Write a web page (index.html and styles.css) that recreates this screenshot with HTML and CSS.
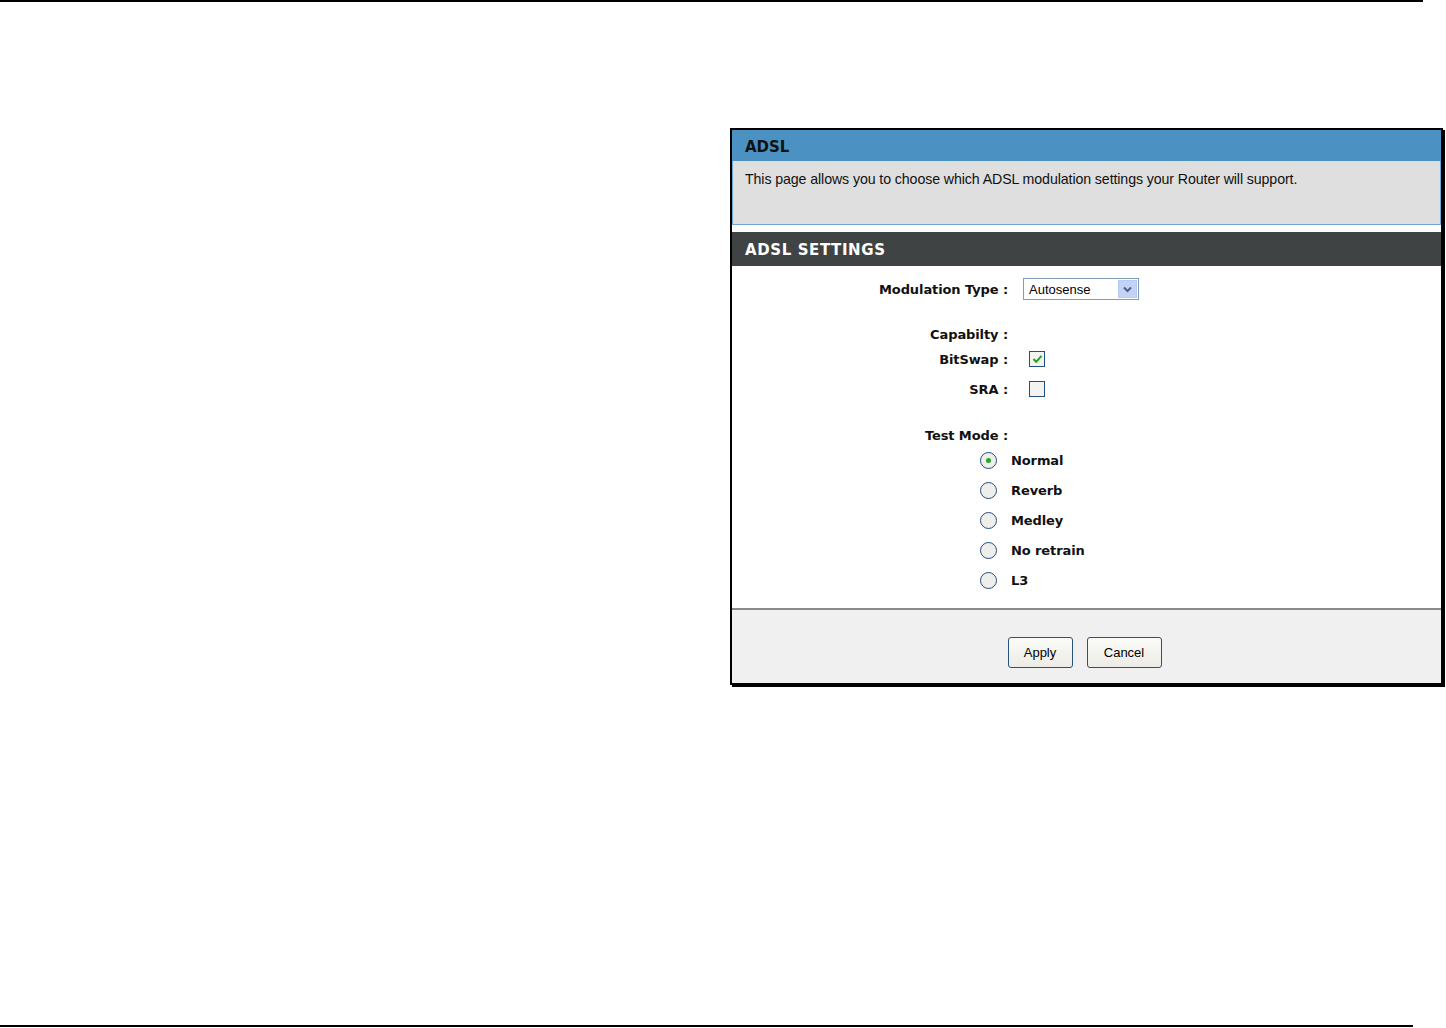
FILE: index.html
```html
<!DOCTYPE html>
<html lang="en">
<head>
  <meta charset="UTF-8">
  <title>ADSL</title>
  <link rel="stylesheet" href="styles.css">
</head>
<body>
  <div class="rule-top"></div>
  <div class="page">
    <div class="panel">
      <div class="head-blue">ADSL</div>
      <div class="desc">This page allows you to choose which ADSL modulation settings your Router will support.</div>
      <div class="gap"></div>
      <div class="head-dark">ADSL SETTINGS</div>
      <div class="content">
        <div class="row row-mod">
          <div class="label">Modulation Type :</div>
          <div class="select">
            <span>Autosense</span>
            <span class="arrow">
              <svg width="9" height="7" viewBox="0 0 9 7"><path d="M1 1.5 L4.5 5 L8 1.5" fill="none" stroke="#4d6185" stroke-width="2"/></svg>
            </span>
          </div>
        </div>
        <div class="row row-cap">
          <div class="label">Capabilty :</div>
        </div>
        <div class="row row-chk">
          <div class="label">BitSwap :</div>
          <span class="check on">
            <svg width="11" height="10" viewBox="0 0 11 10"><path d="M1.5 5 L4.2 7.8 L9.5 1.8" fill="none" stroke="#21a121" stroke-width="2"/></svg>
          </span>
        </div>
        <div class="row row-chk">
          <div class="label">SRA :</div>
          <span class="check"></span>
        </div>
        <div class="row row-test">
          <div class="label">Test Mode :</div>
        </div>
        <div class="radios">
          <div class="radio-row"><span class="radio on"></span><span class="opt">Normal</span></div>
          <div class="radio-row"><span class="radio"></span><span class="opt">Reverb</span></div>
          <div class="radio-row"><span class="radio"></span><span class="opt">Medley</span></div>
          <div class="radio-row"><span class="radio"></span><span class="opt">No retrain</span></div>
          <div class="radio-row"><span class="radio"></span><span class="opt">L3</span></div>
        </div>
      </div>
      <div class="actions">
        <button class="btn btn-apply">Apply</button>
        <button class="btn btn-cancel">Cancel</button>
      </div>
    </div>
  </div>
  <div class="rule-bottom"></div>
</body>
</html>
```

FILE: styles.css
```css
body {
  margin: 0;
  font-family: 'DejaVu Sans', 'Liberation Sans', sans-serif;
  background-color: #fff;
  color: #000;
  width: 1446px;
  height: 1028px;
  position: relative;
  overflow: hidden;
}

.rule-top {
  width: 1423px;
  height: 2px;
  background-color: #000;
}

.rule-bottom {
  position: absolute;
  left: 0;
  top: 1025px;
  width: 1413px;
  height: 2px;
  background-color: #000;
}

.page {
  padding: 126px 0 0 730px;
}

.panel {
  width: 709px;
  border: 2px solid #000;
  box-shadow: 2px 2px 0 #000;
}

.head-blue {
  height: 31px;
  line-height: 34px;
  background-color: #4b92c3;
  padding-left: 13px;
  font-weight: bold;
  font-size: 15px;
  color: #111;
}

.desc {
  height: 64px;
  box-sizing: border-box;
  background-color: #dfdfdf;
  border: 1px solid #6ea5d3;
  border-top: none;
  padding: 10px 0 0 12px;
  font-family: 'Liberation Sans', sans-serif;
  font-size: 14.2px;
  color: #111;
  letter-spacing: -0.1px;
}

.gap {
  height: 7px;
  background-color: #fff;
}

.head-dark {
  height: 34px;
  line-height: 36px;
  background-color: #404344;
  color: #fff;
  padding-left: 13px;
  font-weight: bold;
  font-size: 15px;
  letter-spacing: 0.6px;
}

.content {
  background-color: #fff;
  border-bottom: 2px solid #8a8a8a;
  padding-top: 11px;
  height: 331px;
}

.row {
  display: flex;
  align-items: center;
}

.label {
  width: 276px;
  text-align: right;
  font-weight: bold;
  font-size: 13px;
  color: #111;
  letter-spacing: -0.1px;
  margin-right: 15px;
}

.row-mod {
  height: 24px;
}

.row-cap {
  height: 20px;
  margin-top: 23px;
}

.row-chk {
  height: 30px;
}

.row-test {
  height: 20px;
  margin-top: 21px;
}

.select {
  width: 108px;
  height: 20px;
  border: 1px solid #7f9db9;
  display: flex;
  align-items: center;
  justify-content: space-between;
  font-family: 'Liberation Sans', sans-serif;
  font-size: 13px;
  padding-left: 5px;
  padding-right: 1px;
}

.arrow {
  width: 19px;
  height: 18px;
  background-color: #c3d3f6;
  border: 1px solid #b7c9ef;
  box-sizing: border-box;
  display: flex;
  align-items: center;
  justify-content: center;
}

.check {
  width: 14px;
  height: 14px;
  border: 1px solid #1c5180;
  background-color: #f3f3ef;
  margin-left: 6px;
  display: flex;
  align-items: center;
  justify-content: center;
}

.radios {
  padding-left: 248px;
}

.radio-row {
  display: flex;
  align-items: center;
  height: 30px;
}

.radio {
  width: 15px;
  height: 15px;
  border: 1px solid #1c5180;
  border-radius: 50%;
  background-color: #eeeeea;
  display: flex;
  align-items: center;
  justify-content: center;
  margin-right: 14px;
}

.radio.on::after {
  content: '';
  width: 5px;
  height: 5px;
  border-radius: 50%;
  background-color: #2ba22b;
}

.opt {
  font-weight: bold;
  font-size: 13px;
  color: #111;
  letter-spacing: -0.1px;
}

.actions {
  background-color: #f0f0f0;
  height: 73px;
  box-sizing: border-box;
  display: flex;
  justify-content: center;
  align-items: flex-start;
  gap: 14px;
  padding: 27px 4px 0 0;
}

.btn {
  height: 31px;
  border: 1px solid #25527e;
  border-radius: 3px;
  background: linear-gradient(#fbfbf8, #ecebe5);
  font-family: 'Liberation Sans', sans-serif;
  font-size: 13px;
  color: #000;
  padding: 0;
}

.btn-apply {
  width: 65px;
}

.btn-cancel {
  width: 75px;
}
```
